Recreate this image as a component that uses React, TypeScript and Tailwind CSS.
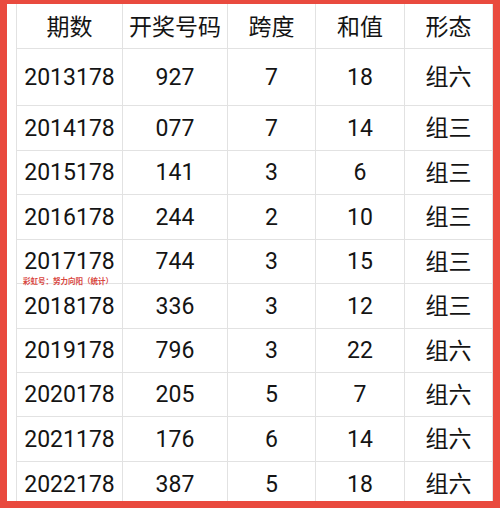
import React from 'react';

const rows: { issue: string; num: string; span: number; sum: number; form: string; h: string }[] = [
  { issue: '2013178', num: '927', span: 7, sum: 18, form: '组六', h: 'h-[57px]' },
  { issue: '2014178', num: '077', span: 7, sum: 14, form: '组三', h: 'h-[45px]' },
  { issue: '2015178', num: '141', span: 3, sum: 6, form: '组三', h: 'h-[44px]' },
  { issue: '2016178', num: '244', span: 2, sum: 10, form: '组三', h: 'h-[45px]' },
  { issue: '2017178', num: '744', span: 3, sum: 15, form: '组三', h: 'h-[44px]' },
  { issue: '2018178', num: '336', span: 3, sum: 12, form: '组三', h: 'h-[45px]' },
  { issue: '2019178', num: '796', span: 3, sum: 22, form: '组六', h: 'h-[44px]' },
  { issue: '2020178', num: '205', span: 5, sum: 7, form: '组六', h: 'h-[44px]' },
  { issue: '2021178', num: '176', span: 6, sum: 14, form: '组六', h: 'h-[45px]' },
  { issue: '2022178', num: '387', span: 5, sum: 18, form: '组六', h: 'h-[45px]' },
];

const rowCls = 'grid grid-cols-[106px_105px_88px_89px_88px] border-b border-[#e2e2e2]';
const cellCls = 'flex items-center justify-center border-r border-[#e2e2e2]';

function App() {
  return (
    <div
      className="h-[508px] w-[500px] bg-[#e94a3e] pt-[4px] pl-[7px] pr-[7px] pb-[7px]"
      style={{ fontFamily: 'Roboto, "Noto Sans CJK SC", sans-serif' }}
    >
      <div className="relative h-full w-full overflow-hidden bg-white pl-[9px] text-[23px] leading-none text-[#141414]">
        <div className="border-l border-[#e2e2e2]">
          <div className={`${rowCls} h-[45px]`}>
            {['期数', '开奖号码', '跨度', '和值', '形态'].map((t) => (
              <div key={t} className={`${cellCls} pt-[2px]`}>
                {t}
              </div>
            ))}
          </div>
          {rows.map((r) => (
            <div key={r.issue} className={`${rowCls} ${r.h}`}>
              <div className={cellCls}>{r.issue}</div>
              <div className={cellCls}>{r.num}</div>
              <div className={cellCls}>{r.span}</div>
              <div className={cellCls}>{r.sum}</div>
              <div className={`${cellCls} pt-[1px]`}>{r.form}</div>
            </div>
          ))}
        </div>
        <span className="absolute left-[16px] top-[274px] text-[7.5px] font-bold leading-none text-[#d9473f]">
          彩虹号：努力向阳（统计）
        </span>
      </div>
    </div>
  );
}

export default App;
